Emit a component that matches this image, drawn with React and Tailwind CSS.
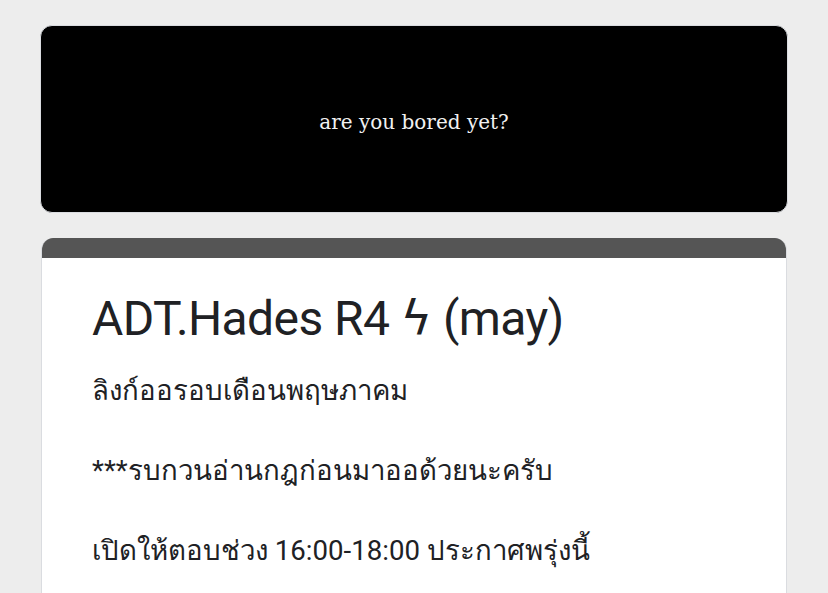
export default function App() {
  return (
    <div className="h-[593px] overflow-hidden bg-[#ededed] px-[40px] pt-[25px]" style={{ fontFamily: 'Roboto, "Noto Sans", sans-serif' }}>
      <div className="h-[188px] rounded-[12px] border border-[#dadce0] bg-black flex items-center justify-center">
        <span className="text-[#f1f1f1] text-[20px] pt-[6px]" style={{ fontFamily: '"DejaVu Serif", "Liberation Serif", serif' }}>
          are you bored yet?
        </span>
      </div>
      <div className="mt-[25px] mx-[1px] rounded-t-[12px] overflow-hidden bg-white border border-[#dadce0] border-t-0">
        <div className="h-[20px] bg-[#555555]" />
        <div className="pl-[50px] pr-[40px] pt-[30px] pb-[60px] text-[#202124]">
          <h1 className="text-[48px] leading-[60px] tracking-[-0.6px]">
            ADT.Hades R4 <span style={{ fontFamily: '"DejaVu Sans", sans-serif' }}>ϟ</span> (may)
          </h1>
          <div className="mt-[22px] text-[27.6px] leading-[40px] text-[#202124]">
            <p>ลิงก์ออรอบเดือนพฤษภาคม</p>
            <p className="h-[40px]" />
            <p>***รบกวนอ่านกฎก่อนมาออด้วยนะครับ</p>
            <p className="h-[40px]" />
            <p>เปิดให้ตอบช่วง 16:00-18:00 ประกาศพรุ่งนี้</p>
          </div>
        </div>
      </div>
    </div>
  );
}
